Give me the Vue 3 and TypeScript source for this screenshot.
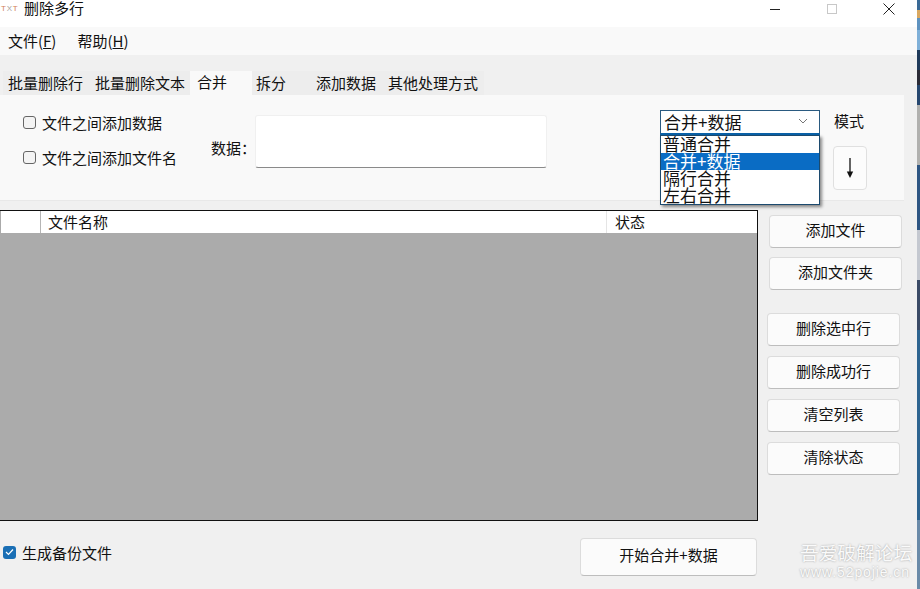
<script setup lang="ts">
const menus = [
  { label: '文件(', key: 'F' },
  { label: '帮助(', key: 'H' },
]
const tabs = [
  { label: '批量删除行', w: 85, p: 5 },
  { label: '批量删除文本', w: 102, p: 7 },
  { label: '合并', w: 62, p: 7 },
  { label: '拆分', w: 58, p: 4 },
  { label: '添加数据', w: 74, p: 6 },
  { label: '其他处理方式', w: 100, p: 4 },
]
const modes = ['普通合并', '合并+数据', '隔行合并', '左右合并']
const topButtons = ['添加文件', '添加文件夹']
const lowerButtons = ['删除选中行', '删除成功行', '清空列表', '清除状态']
</script>

<template>
  <div class="screen">
    <div class="window">
      <header class="titlebar">
        <span class="logo"><i>T</i>x<i>T</i></span>
        <span class="title">删除多行</span>
        <div class="controls">
          <svg width="12" height="12" viewBox="0 0 12 12"><path d="M1 6.500H11" stroke="#222" fill="none" /></svg>
          <svg width="12" height="12" viewBox="0 0 12 12"><rect x="1.500" y="1.500" width="9" height="9" stroke="#c8c8c8" fill="none" /></svg>
          <svg width="12" height="12" viewBox="0 0 12 12"><path d="M.5 .5L11.500 11.500M11.500 .5L.5 11.500" stroke="#222" fill="none" /></svg>
        </div>
      </header>

      <nav class="menubar">
        <span v-for="m in menus" :key="m.key" class="menu">{{ m.label }}<u>{{ m.key }}</u>)</span>
      </nav>

      <div class="tabs">
        <span
          v-for="(t, i) in tabs"
          :key="t.label"
          class="tab"
          :class="{ active: i === 2 }"
          :style="{ width: t.w + 'px', paddingLeft: t.p + 'px' }"
        >{{ t.label }}</span>
      </div>

      <section class="panel">
        <div class="checks">
          <label class="check"><span class="box"></span>文件之间添加数据</label>
          <label class="check"><span class="box"></span>文件之间添加文件名</label>
        </div>
        <span class="data-label">数据：</span>
        <div class="data-input"></div>
        <div class="mode-area">
          <div class="combo-wrap">
            <div class="combo">
              <span>合并+数据</span>
              <svg width="10" height="6" viewBox="0 0 10 6"><path d="M1 1L5 5L9 1" stroke="#777" fill="none" /></svg>
            </div>
            <ul class="dropdown">
              <li v-for="(m, i) in modes" :key="m" :class="{ selected: i === 1 }">{{ m }}</li>
            </ul>
          </div>
          <div class="mode-side">
            <span class="mode-label">模式</span>
            <button class="arrow-btn" type="button">
              <svg width="10" height="22" viewBox="0 0 10 22"><path d="M5 1V16" stroke="#111" stroke-width="1.300" fill="none" /><path d="M1.800 14.500H8.200L5 21Z" fill="#111" /></svg>
            </button>
          </div>
        </div>
      </section>

      <div class="main">
        <div class="table">
          <div class="thead">
            <span class="th-index"></span>
            <span class="th-name">文件名称</span>
            <span class="th-status">状态</span>
          </div>
        </div>
        <aside class="side">
          <div class="side-top">
            <button v-for="b in topButtons" :key="b" class="btn" type="button">{{ b }}</button>
          </div>
          <div class="side-lower">
            <button v-for="b in lowerButtons" :key="b" class="btn" type="button">{{ b }}</button>
          </div>
        </aside>
      </div>

      <footer class="footer">
        <label class="backup">
          <span class="box-on">
            <svg width="9" height="8" viewBox="0 0 9 8"><path d="M1 4L3.500 6.500L8 1.500" stroke="#fff" stroke-width="1.200" fill="none" /></svg>
          </span>生成备份文件
        </label>
        <button class="btn start" type="button">开始合并+数据</button>
      </footer>

      <div class="watermark">
        <div class="wm-cn">吾爱破解论坛</div>
        <div class="wm-en">www.52pojie.cn</div>
      </div>
    </div>
    <div class="strip"></div>
  </div>
</template>

<style>
html, body { margin: 0; background: #f0f0f0; }
</style>

<style scoped>
.screen {
  width: 920px;
  height: 589px;
  display: flex;
  overflow: hidden;
  font-family: "Noto Sans CJK SC", "Liberation Sans", sans-serif;
  font-size: 15px;
  color: #111;
}
.window {
  position: relative;
  width: 917px;
  background: #f0f0f0;
  display: flex;
  flex-direction: column;
}
.strip {
  width: 3px;
  background: linear-gradient(
    #3a6a96 0 10px,
    #d9a860 10px 18px,
    #5f93c0 18px 30px,
    #7fb0d8 30px 50px,
    #1f3a5a 50px 70px,
    #2a2a35 70px 85px,
    #26476f 85px 105px,
    #b0b0ae 105px 165px,
    #2d5582 165px 230px,
    #c4c8d0 230px 280px,
    #3a4a66 280px 330px,
    #2d6490 330px 520px,
    #6a8aa8 520px
  );
}
.titlebar {
  height: 27px;
  background: #fff;
  display: flex;
  align-items: flex-start;
}
.logo {
  width: 24px;
  box-sizing: border-box;
  padding: 4px 0 0 1px;
  font: 8px/9px "Liberation Sans", sans-serif;
  letter-spacing: 0.8px;
  color: #a9a09a;
  text-transform: uppercase;
}
.logo i { font-style: normal; color: #d2805a; }
.title { font-size: 15px; line-height: 15px; }
.controls {
  margin-left: auto;
  display: flex;
  gap: 45px;
  padding: 3px 22px 0 0;
}
.menubar {
  height: 28px;
  background: #f9f9f9;
  display: flex;
  align-items: center;
  gap: 21px;
  padding-left: 8px;
}
.menu { line-height: 28px; }
.tabs {
  margin-top: 16px;
  height: 24px;
  display: flex;
  padding-left: 3px;
}
.tab {
  box-sizing: border-box;
  padding-top: 1px;
  line-height: 22px;
  background: #ededed;
  white-space: nowrap;
}
.tab.active {
  background: #f9f9f9;
  padding-top: 0;
}
.panel {
  height: 106px;
  width: 904px;
  box-sizing: border-box;
  background: #f9f9f9;
  border-bottom: 1px solid #e8e8e8;
  display: flex;
  padding: 20px 0 0 23px;
}
.checks {
  width: 188px;
  display: flex;
  flex-direction: column;
  gap: 18px;
}
.check {
  display: flex;
  align-items: center;
  gap: 6px;
  height: 20px;
  margin-top: -3px;
  white-space: nowrap;
}
.box {
  width: 11px;
  height: 11px;
  border: 1px solid #666;
  border-radius: 3px;
  background: #f4f4f4;
}
.data-label { margin-top: 22px; width: 44px; white-space: nowrap; }
.data-input {
  width: 292px;
  height: 53px;
  box-sizing: border-box;
  background: #fff;
  border: 1px solid #f0f0f0;
  border-bottom-color: #8a8a8a;
  border-radius: 3px;
}
.mode-area {
  display: flex;
  margin-left: 113px;
  margin-top: -5px;
}
.combo-wrap { position: relative; width: 160px; }
.combo {
  height: 25px;
  box-sizing: border-box;
  border: 1px solid #2a5a80;
  border-bottom: 2px solid #0a62a8;
  background: #fff;
  display: flex;
  align-items: center;
  justify-content: space-between;
  padding: 0 11px 2px 3px;
  font-size: 17px;
}
.dropdown {
  position: absolute;
  left: 0;
  top: 25px;
  width: 160px;
  height: 70px;
  box-sizing: border-box;
  margin: 0;
  padding: 0;
  list-style: none;
  background: #fff;
  border: 1px solid #1c4a6e;
  box-shadow: 2px 2px 3px rgba(0, 0, 0, 0.45);
  font-size: 17px;
  z-index: 3;
}
.dropdown li {
  height: 17px;
  line-height: 15px;
  padding-left: 2px;
}
.dropdown li.selected { background: #0a6cc4; color: #fff; }
.mode-side {
  margin-left: 14px;
  display: flex;
  flex-direction: column;
  align-items: flex-start;
}
.mode-label { line-height: 22px; }
.arrow-btn {
  margin-top: 14px;
  margin-left: -1px;
  width: 34px;
  height: 44px;
  padding: 0;
  border: 1px solid #e0e0e0;
  border-radius: 4px;
  background: #fcfcfc;
  display: flex;
  align-items: center;
  justify-content: center;
}
.main {
  margin-top: 9px;
  display: flex;
}
.table {
  width: 758px;
  height: 311px;
  box-sizing: border-box;
  border: 1px solid #111;
  border-left: 0;
  background: #ababab;
}
.thead {
  height: 22px;
  background: #fff;
  display: flex;
  line-height: 22px;
}
.th-index { box-sizing: border-box; width: 41px; border-left: 1px solid #aaa; border-right: 1px solid #b5b5b5; }
.th-name { width: 558px; padding-left: 7px; border-right: 1px solid #e5e5e5; }
.th-status { padding-left: 8px; }
.side {
  display: flex;
  flex-direction: column;
  padding-top: 5px;
}
.side-top {
  margin-left: 11px;
  display: flex;
  flex-direction: column;
  gap: 9px;
}
.side-lower {
  margin-left: 9px;
  margin-top: 23px;
  display: flex;
  flex-direction: column;
  gap: 10px;
}
.btn {
  width: 133px;
  height: 33px;
  padding: 0 0 5px;
  border: 1px solid #dcdcdc;
  border-bottom-color: #bdbdbd;
  border-radius: 4px;
  background: #fbfbfb;
  color: #111;
  font: inherit;
}
.footer {
  flex: 1;
  display: flex;
  align-items: flex-start;
}
.backup {
  display: flex;
  align-items: center;
  gap: 6px;
  width: 577px;
  margin: 21px 0 0 3px;
  height: 20px;
}
.box-on {
  width: 13px;
  height: 13px;
  border-radius: 3px;
  background: #1a6fb5;
  display: flex;
  align-items: center;
  justify-content: center;
}
.start {
  width: 177px;
  height: 38px;
  margin-top: 17px;
}
.watermark {
  position: absolute;
  left: 800px;
  top: 540px;
  color: #fafafa;
  text-shadow: 0 0 2px #999;
}
.wm-cn { font-size: 18.700px; line-height: 24px; }
.wm-en { font: 14px/16px "Liberation Sans", sans-serif; letter-spacing: 0.900px; }
</style>
